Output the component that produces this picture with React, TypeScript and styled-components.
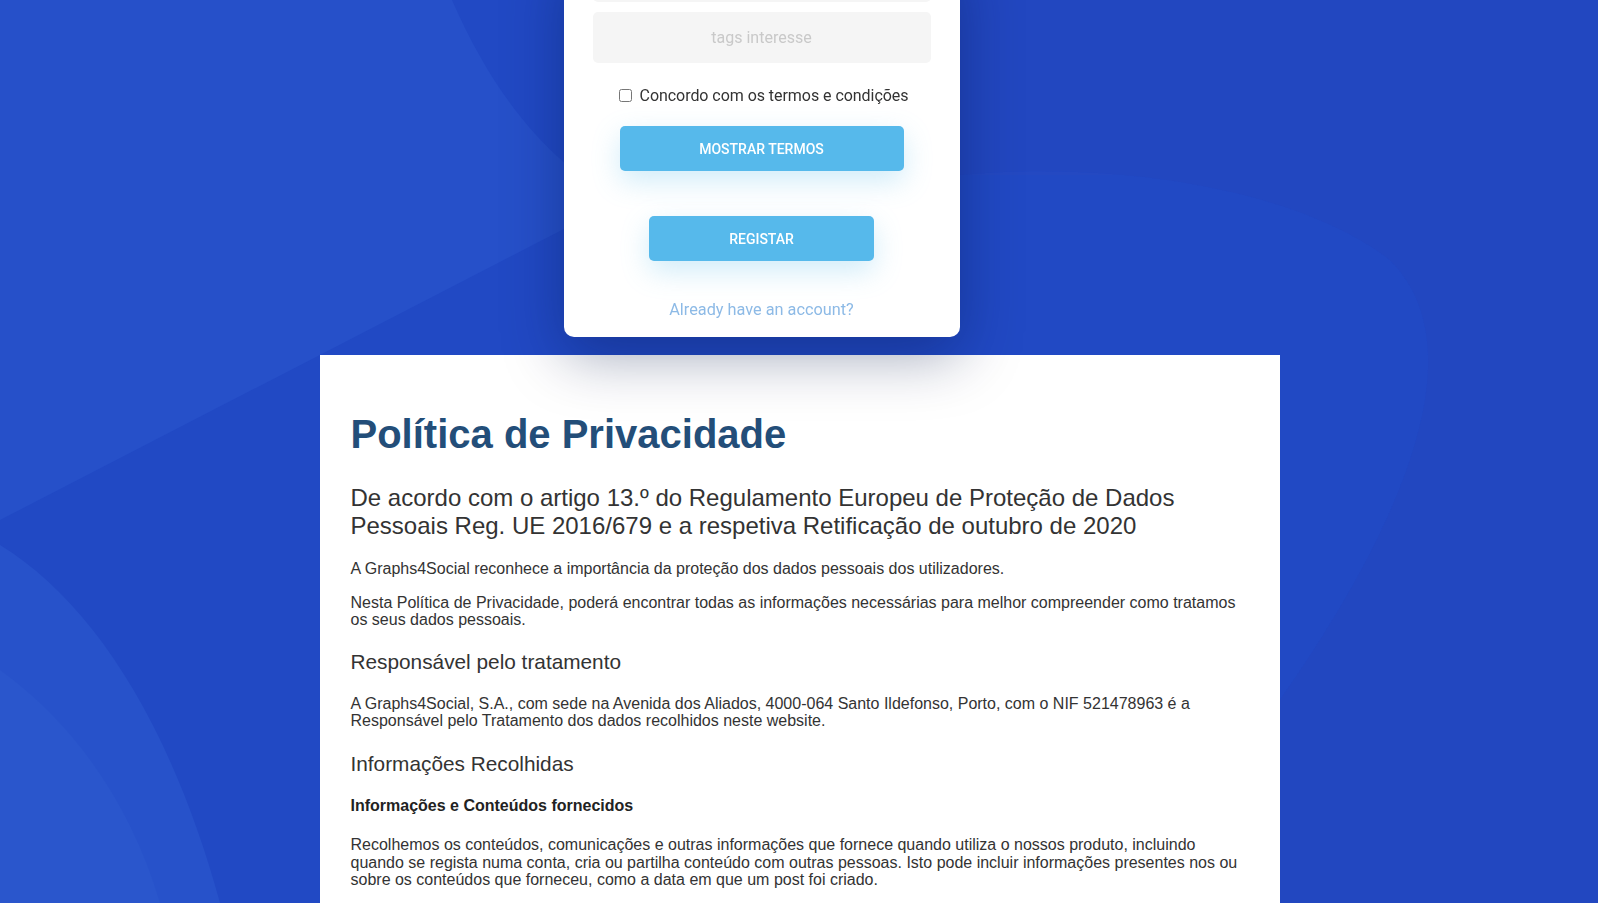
import React from "react";
import styled, { createGlobalStyle } from "styled-components";

const GlobalStyle = createGlobalStyle`
  html, body {
    margin: 0;
    padding: 0;
  }
  body {
    background: #2149c4;
    font-family: Roboto, "Liberation Sans", Arial, sans-serif;
    overflow: hidden;
  }
`;

const Backdrop = styled.svg`
  position: fixed;
  inset: 0;
  width: 100%;
  height: 100%;
  z-index: 0;
`;

const Page = styled.div`
  position: relative;
  z-index: 1;
  width: 960px;
  margin: 0 auto;
  padding-left: 1px;
  display: flex;
  flex-direction: column;
`;

const Card = styled.form`
  position: relative;
  z-index: 2;
  width: 396px;
  box-sizing: border-box;
  margin: -49px 0 0 244px;
  padding: 0 29px 18px;
  background: #fff;
  border-radius: 0 0 10px 10px;
  box-shadow: 0 18px 60px rgba(6, 20, 70, 0.38);
  display: flex;
  flex-direction: column;
  align-items: center;
`;

const Field = styled.input`
  width: 100%;
  height: 51px;
  box-sizing: border-box;
  border: none;
  border-radius: 5px;
  background: #f5f5f5;
  font-family: Roboto, "Liberation Sans", sans-serif;
  font-size: 16px;
  text-align: center;
  color: #333;
  outline: none;
  & + & {
    margin-top: 10px;
  }
  &::placeholder {
    color: #c9c9c9;
  }
`;

const TermsRow = styled.label`
  display: flex;
  align-items: center;
  gap: 8px;
  margin-top: 23px;
  padding-left: 4px;
  font-size: 16px;
  line-height: 19px;
  letter-spacing: -0.05px;
  color: #333;
`;

const Checkbox = styled.input`
  width: 13px;
  height: 13px;
  margin: 0;
`;

const ActionButton = styled.button<{ $width: number; $gap: number }>`
  width: ${(p) => p.$width}px;
  height: 45px;
  margin-top: ${(p) => p.$gap}px;
  border: none;
  border-radius: 5px;
  background: #56b9eb;
  color: #fff;
  font-family: Roboto, "Liberation Sans", sans-serif;
  font-size: 14px;
  font-weight: 500;
  text-transform: uppercase;
  box-shadow: 0 10px 28px rgba(86, 185, 235, 0.28);
  cursor: pointer;
`;

const LoginLink = styled.a`
  margin-top: 39px;
  font-size: 16.3px;
  line-height: 19px;
  color: #8dbae6;
  text-decoration: none;
`;

const Policy = styled.article`
  margin-top: 18px;
  background: #fff;
  padding: 30px 30px 40px 31px;
  font-family: "Liberation Sans", Arial, sans-serif;
  color: #333;
`;

const Title = styled.h1`
  margin: 26px 0 0;
  font-size: 40px;
  line-height: 47px;
  font-weight: 700;
  color: #234e79;
`;

const Lead = styled.h2`
  margin: 26px 0 0;
  font-size: 24px;
  line-height: 28px;
  font-weight: 400;
  color: #333;
`;

const Section = styled.h3<{ $gap: number }>`
  margin: ${(p) => p.$gap}px 0 0;
  font-size: 20.8px;
  line-height: 24px;
  font-weight: 400;
  color: #333;
`;

const SubSection = styled.h4`
  margin: 21px 0 0;
  font-size: 16px;
  line-height: 18px;
  font-weight: 700;
  color: #222;
`;

const Text = styled.p<{ $gap?: number }>`
  margin: ${(p) => p.$gap ?? 16}px 0 0;
  font-size: 16px;
  line-height: 17.6px;
`;

function Background() {
  return (
    <Backdrop viewBox="0 0 1598 903" preserveAspectRatio="none">
      <rect width="1598" height="903" fill="#2149c4" />
      <path d="M0 0 H452 C500 110 560 170 620 200 L0 520 Z" fill="#2650c9" />
      <path
        d="M960 175 C1120 160 1300 190 1390 260 C1470 340 1420 500 1280 700 L1598 903 V175 Z"
        fill="#2449c2"
      />
      <path
        d="M960 175 C1120 160 1300 190 1390 260 C1470 340 1420 500 1280 700 C1200 820 1150 903 1150 903 H1598 V0 H960 Z"
        fill="#2247c0"
      />
      <path d="M0 545 C90 600 170 720 220 903 H0 Z" fill="#2752ca" />
      <path d="M0 670 C70 720 130 800 160 903 H0 Z" fill="#2a56cc" />
    </Backdrop>
  );
}

export default function App() {
  return (
    <>
      <GlobalStyle />
      <Background />
      <Page>
        <Card onSubmit={(e) => e.preventDefault()}>
          <Field placeholder="interesses" />
          <Field placeholder="tags interesse" />
          <TermsRow>
            <Checkbox type="checkbox" />
            Concordo com os termos e condições
          </TermsRow>
          <ActionButton type="button" $width={284} $gap={21}>
            Mostrar termos
          </ActionButton>
          <ActionButton type="submit" $width={225} $gap={45}>
            Registar
          </ActionButton>
          <LoginLink href="#">Already have an account?</LoginLink>
        </Card>
        <Policy>
          <Title>Política de Privacidade</Title>
          <Lead>
            De acordo com o artigo 13.º do Regulamento Europeu de Proteção de
            Dados Pessoais Reg. UE 2016/679 e a respetiva Retificação de outubro
            de 2020
          </Lead>
          <Text $gap={20}>
            A Graphs4Social reconhece a importância da proteção dos dados
            pessoais dos utilizadores.
          </Text>
          <Text>
            Nesta Política de Privacidade, poderá encontrar todas as informações
            necessárias para melhor compreender como tratamos os seus dados
            pessoais.
          </Text>
          <Section $gap={21}>Responsável pelo tratamento</Section>
          <Text $gap={21}>
            A Graphs4Social, S.A., com sede na Avenida dos Aliados, 4000-064
            Santo Ildefonso, Porto, com o NIF 521478963 é a Responsável pelo
            Tratamento dos dados recolhidos neste website.
          </Text>
          <Section $gap={22}>Informações Recolhidas</Section>
          <SubSection>Informações e Conteúdos fornecidos</SubSection>
          <Text $gap={21}>
            Recolhemos os conteúdos, comunicações e outras informações que
            fornece quando utiliza o nossos produto, incluindo quando se regista
            numa conta, cria ou partilha conteúdo com outras pessoas. Isto pode
            incluir informações presentes nos ou sobre os conteúdos que
            forneceu, como a data em que um post foi criado.
          </Text>
        </Policy>
      </Page>
    </>
  );
}
